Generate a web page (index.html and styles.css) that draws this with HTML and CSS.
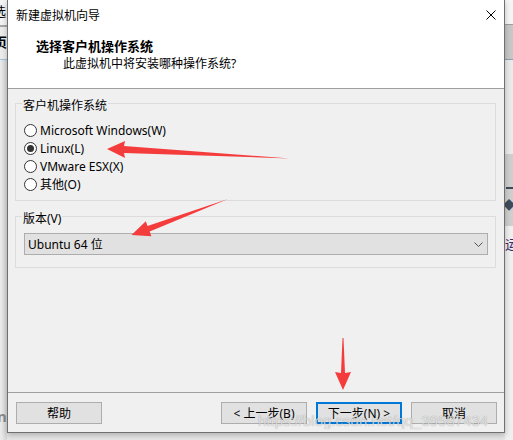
FILE: index.html
```html
<!DOCTYPE html>
<html lang="zh-CN">
<head>
    <meta charset="UTF-8">
    <title>新建虚拟机向导</title>
    <link rel="stylesheet" href="styles.css">
</head>
<body>
    <div class="desktop">
        <!-- Janela de trás (esquerda) -->
        <div class="behind behind-left">
            <div class="bl-top"><span>选</span></div>
            <div class="bl-bar"><span>页</span></div>
            <div class="bl-rest"><span class="bl-n">n</span></div>
        </div>

        <div class="wizard">
            <div class="top">
                <div class="titlebar">
                    <span class="title">新建虚拟机向导</span>
                    <svg class="close" width="10" height="10" viewBox="0 0 10 10">
                        <path d="M0.5 0.5 L9.5 9.5 M9.5 0.5 L0.5 9.5" stroke="#000" stroke-width="1" fill="none"/>
                    </svg>
                </div>
                <div class="intro">
                    <h1>选择客户机操作系统</h1>
                    <p>此虚拟机中将安装哪种操作系统?</p>
                </div>
            </div>

            <div class="content">
                <div class="group group-os">
                    <div class="group-title">客户机操作系统</div>
                    <div class="radio"><span class="circle"></span>Microsoft Windows(W)</div>
                    <div class="radio"><span class="circle checked"></span>Linux(L)</div>
                    <div class="radio"><span class="circle"></span>VMware ESX(X)</div>
                    <div class="radio"><span class="circle"></span>其他(O)</div>
                </div>

                <div class="group group-ver">
                    <div class="group-title">版本(V)</div>
                    <div class="select">
                        <span>Ubuntu 64 位</span>
                        <svg width="9" height="5" viewBox="0 0 9 5">
                            <path d="M0.5 0.5 L4.5 4.5 L8.5 0.5" stroke="#555" stroke-width="1" fill="none"/>
                        </svg>
                    </div>
                </div>
            </div>

            <div class="footer">
                <button class="btn">帮助</button>
                <div class="spacer"></div>
                <button class="btn">&lt; 上一步(B)</button>
                <button class="btn primary">下一步(N) &gt;</button>
                <button class="btn">取消</button>
            </div>
        </div>

        <!-- Janela de trás (direita) -->
        <div class="behind behind-right">
            <div class="br-top"></div>
            <div class="br-gray"></div>
            <div class="br-light"></div>
            <div class="br-dark">
                <span class="br-dash"></span>
                <span class="br-diamond">◆</span>
            </div>
            <div class="br-rest"><span>运</span></div>
        </div>
    </div>

    <!-- Setas vermelhas -->
    <svg class="marks" width="513" height="440" viewBox="0 0 513 440">
        <polygon fill="#f53c3c" points="107,149 125,141 124,146 290,158.5 124,153 125,158"/>
        <polygon fill="#f53c3c" points="131.5,235 145.8,221.2 147.5,225.9 228,199 149.7,231.5 151.4,236.2"/>
        <polygon fill="#f53c3c" points="342.5,338 343.5,338 345,373 351,372 343,390 335,372 341,373"/>
    </svg>

    <div class="watermark">https://blog.csdn.net/qq_39587434</div>
</body>
</html>
```

FILE: styles.css
```css
body {
    margin: 0;
    width: 513px;
    height: 440px;
    overflow: hidden;
    background-color: #e6e6e6;
    font-family: "Noto Sans", "Noto Sans CJK SC", sans-serif;
    font-size: 12px;
    color: #000;
    position: relative;
}

.desktop {
    display: flex;
    height: 440px;
}

/* Janelas de trás */
.behind {
    overflow: hidden;
    display: flex;
    flex-direction: column;
}

.behind-left {
    width: 7px;
}

.bl-top {
    height: 25px;
    background-color: #f4f4f4;
    border-bottom: 2px solid #a8a8a8;
    line-height: 22px;
    font-size: 13px;
}

.bl-top span {
    margin-left: -7px;
}

.bl-bar {
    height: 32px;
    background-color: #ececec;
    border-bottom: 1px solid #9fc3dd;
    font-weight: bold;
    font-size: 13px;
    line-height: 30px;
}

.bl-bar span {
    margin-left: -6px;
}

.bl-rest {
    flex: 1;
    background: linear-gradient(to right, #ececec, #d6d6d6);
    position: relative;
}

.bl-n {
    position: absolute;
    left: -3px;
    top: 346px;
    color: #8a8a8a;
    font-weight: bold;
    font-size: 15px;
}

.behind-right {
    width: 8px;
}

.br-top {
    height: 24px;
    background-color: #f6f6f6;
    border-bottom: 1px solid #a0a0a0;
}

.br-gray {
    height: 34px;
    background-color: #c8c8c8;
    border-bottom: 1px solid #8aa0b4;
}

.br-light {
    height: 94px;
    background-color: #ebebeb;
}

.br-dark {
    height: 72px;
    background-color: #cfcfcf;
    display: flex;
    flex-direction: column;
}

.br-dash {
    display: block;
    width: 8px;
    height: 2px;
    margin: 33px 0 0 1px;
    background-color: #3e4c5a;
}

.br-diamond {
    display: block;
    margin: 10px 0 0 -2px;
    font-size: 12px;
    line-height: 14px;
    color: #3e4c5a;
}

.br-rest {
    flex: 1;
    background-color: #f0f0f0;
    font-size: 13px;
    line-height: 18px;
    color: #3c2a6a;
}

.br-rest span {
    display: block;
    margin: 9px 0 0 0;
}

/* Janela do assistente */
.wizard {
    width: 498px;
    height: 433px;
    box-sizing: border-box;
    border: 1px solid #707070;
    border-top: none;
    background-color: #f0f0f0;
    display: flex;
    flex-direction: column;
    box-shadow: 0 2px 6px rgba(0, 0, 0, 0.25);
    position: relative;
}

.top {
    height: 88px;
    background-color: #fff;
    border-bottom: 1px solid #a0a0a0;
}

.titlebar {
    height: 30px;
    display: flex;
    align-items: center;
    justify-content: space-between;
    padding: 0 8px 0 8px;
}

.title {
    line-height: 17px;
}

.intro h1 {
    margin: 8px 0 0 28px;
    font-size: 13px;
    line-height: 17px;
    font-weight: bold;
}

.intro p {
    margin: 0 0 0 55px;
    line-height: 17px;
}

.content {
    flex: 1;
    padding: 14px 8px 0 7px;
}

.group {
    border: 1px solid #dcdcdc;
}

.group-title {
    width: fit-content;
    margin: -7px 0 0 -2px;
    padding: 0 1px;
    line-height: 17px;
    background-color: #f0f0f0;
}

.group-os {
    padding: 0 0 7px 8px;
}

.group-os .group-title {
    margin-bottom: 7px;
}

.radio {
    display: flex;
    align-items: center;
    gap: 3px;
    height: 18px;
}

.circle {
    width: 13px;
    height: 13px;
    box-sizing: border-box;
    border: 1px solid #333;
    border-radius: 50%;
    background-color: #fff;
    display: flex;
    align-items: center;
    justify-content: center;
}

.circle.checked::after {
    content: "";
    width: 7px;
    height: 7px;
    border-radius: 50%;
    background-color: #333;
}

.group-ver {
    margin-top: 15px;
    padding: 0 7px 12px 8px;
}

.group-ver .group-title {
    margin-bottom: 6px;
}

.select {
    height: 22px;
    box-sizing: border-box;
    border: 1px solid #adadad;
    background-color: #e1e1e1;
    display: flex;
    align-items: center;
    justify-content: space-between;
    padding: 0 4px 0 3px;
}

/* Rodapé com botões */
.footer {
    border-top: 1px solid #a0a0a0;
    padding: 9px 7px 8px 8px;
    display: flex;
    gap: 9px;
}

.spacer {
    flex: 1;
}

.btn {
    width: 86px;
    height: 22px;
    box-sizing: border-box;
    border: 1px solid #adadad;
    background-color: #e1e1e1;
    font-family: inherit;
    font-size: 12px;
    color: #000;
    padding: 0;
}

.btn.primary {
    border-color: #0078d7;
    box-shadow: inset 0 0 0 1px #0078d7;
}

/* Anotações por cima */
.marks {
    position: absolute;
    left: 0;
    top: 0;
    pointer-events: none;
}

.watermark {
    position: absolute;
    left: 258px;
    top: 412px;
    font-family: "Liberation Sans", sans-serif;
    font-size: 15px;
    color: rgba(255, 255, 255, 0.7);
    text-shadow: 0 0 1px rgba(0, 0, 0, 0.4);
    pointer-events: none;
}
```
